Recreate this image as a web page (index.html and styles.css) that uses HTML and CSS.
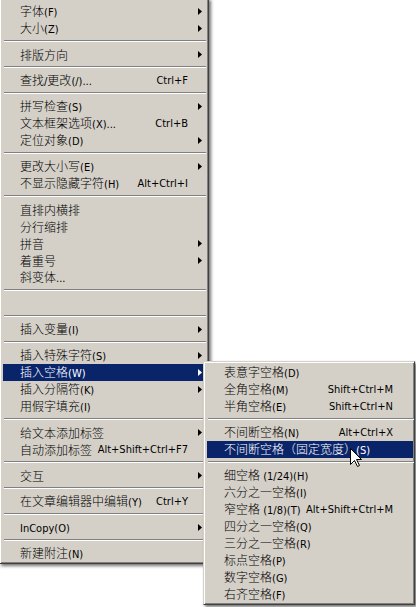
FILE: index.html
```html
<!DOCTYPE html>
<html lang="zh-CN">
<head>
<meta charset="utf-8">
<title>文字菜单</title>
<link rel="stylesheet" href="styles.css">
</head>
<body>
<div class="screen">
  <div class="menu main">
    <div class="item"><span class="label">字体<span class="en">(F)</span></span><i class="arr"></i></div>
    <div class="item"><span class="label">大小<span class="en">(Z)</span></span><i class="arr"></i></div>
    <div class="sep"></div>
    <div class="item"><span class="label">排版方向</span><i class="arr"></i></div>
    <div class="sep"></div>
    <div class="item"><span class="label">查找<span class="en">/</span>更改<span class="en">(/)...</span></span><span class="key">Ctrl+F</span></div>
    <div class="sep"></div>
    <div class="item"><span class="label">拼写检查<span class="en">(S)</span></span><i class="arr"></i></div>
    <div class="item"><span class="label">文本框架选项<span class="en">(X)...</span></span><span class="key">Ctrl+B</span></div>
    <div class="item"><span class="label">定位对象<span class="en">(D)</span></span><i class="arr"></i></div>
    <div class="sep"></div>
    <div class="item"><span class="label">更改大小写<span class="en">(E)</span></span><i class="arr"></i></div>
    <div class="item"><span class="label">不显示隐藏字符<span class="en">(H)</span></span><span class="key">Alt+Ctrl+I</span></div>
    <div class="sep"></div>
    <div class="item"><span class="label">直排内横排</span></div>
    <div class="item"><span class="label">分行缩排</span></div>
    <div class="item"><span class="label">拼音</span><i class="arr"></i></div>
    <div class="item"><span class="label">着重号</span><i class="arr"></i></div>
    <div class="item"><span class="label">斜变体<span class="en">...</span></span></div>
    <div class="sep"></div>
    <div class="item"><span class="label"></span></div>
    <div class="sep"></div>
    <div class="item"><span class="label">插入变量<span class="en">(I)</span></span><i class="arr"></i></div>
    <div class="sep"></div>
    <div class="item"><span class="label">插入特殊字符<span class="en">(S)</span></span><i class="arr"></i></div>
    <div class="item on"><span class="label">插入空格<span class="en">(W)</span></span><i class="arr"></i></div>
    <div class="item"><span class="label">插入分隔符<span class="en">(K)</span></span><i class="arr"></i></div>
    <div class="item"><span class="label">用假字填充<span class="en">(I)</span></span></div>
    <div class="sep"></div>
    <div class="item"><span class="label">给文本添加标签</span><i class="arr"></i></div>
    <div class="item"><span class="label">自动添加标签</span><span class="key">Alt+Shift+Ctrl+F7</span></div>
    <div class="sep"></div>
    <div class="item"><span class="label">交互</span><i class="arr"></i></div>
    <div class="sep"></div>
    <div class="item"><span class="label">在文章编辑器中编辑<span class="en">(Y)</span></span><span class="key">Ctrl+Y</span></div>
    <div class="sep"></div>
    <div class="item"><span class="label"><span class="en">InCopy(O)</span></span><i class="arr"></i></div>
    <div class="sep"></div>
    <div class="item"><span class="label">新建附注<span class="en">(N)</span></span></div>
  </div>

  <div class="menu submenu">
    <div class="item"><span class="label">表意字空格<span class="en">(D)</span></span></div>
    <div class="item"><span class="label">全角空格<span class="en">(M)</span></span><span class="key">Shift+Ctrl+M</span></div>
    <div class="item"><span class="label">半角空格<span class="en">(E)</span></span><span class="key">Shift+Ctrl+N</span></div>
    <div class="sep"></div>
    <div class="item"><span class="label">不间断空格<span class="en">(N)</span></span><span class="key">Alt+Ctrl+X</span></div>
    <div class="item on"><span class="label">不间断空格（固定宽度）<span class="en">(S)</span></span></div>
    <div class="sep"></div>
    <div class="item"><span class="label">细空格<span class="en"> (1/24)(H)</span></span></div>
    <div class="item"><span class="label">六分之一空格<span class="en">(I)</span></span></div>
    <div class="item"><span class="label">窄空格<span class="en"> (1/8)(T)</span></span><span class="key">Alt+Shift+Ctrl+M</span></div>
    <div class="item"><span class="label">四分之一空格<span class="en">(Q)</span></span></div>
    <div class="item"><span class="label">三分之一空格<span class="en">(R)</span></span></div>
    <div class="item"><span class="label">标点空格<span class="en">(P)</span></span></div>
    <div class="item"><span class="label">数字空格<span class="en">(G)</span></span></div>
    <div class="item"><span class="label">右齐空格<span class="en">(F)</span></span></div>
  </div>

  <svg class="cursor" width="13" height="21" viewBox="0 0 13 21" aria-hidden="true">
    <path d="M0.5 0.5 V16.5 L4.5 12.5 L7.5 18.5 L9.5 17.5 L6.5 11.5 H11.5 Z" fill="#fff" stroke="#000" stroke-width="1" stroke-linejoin="miter"/>
  </svg>
</div>
</body>
</html>
```

FILE: styles.css
```css
html, body {
  margin: 0;
  padding: 0;
  background: #ffffff;
}

.screen {
  position: relative;
  width: 416px;
  height: 607px;
  overflow: hidden;
}

.menu {
  background: #d4d0c8;
  color: #000;
  border: 1px solid;
  border-color: #d4d0c8 #404040 #404040 #d4d0c8;
  box-shadow: inset 1px 1px 0 #ffffff, inset -1px -1px 0 #808080, 2px 2px 3px rgba(0, 0, 0, 0.55);
  font-family: "DejaVu Sans Condensed", "Liberation Sans", "Noto Sans CJK SC", sans-serif;
  font-size: 12px;
  box-sizing: border-box;
}

.main {
  width: 210px;
  margin: -2px 0 0 -1px;
  padding: 4px 3px 1px 3px;
}

.submenu {
  position: absolute;
  left: 203px;
  top: 361px;
  width: 212px;
  padding: 2px 1px 1px 3px;
}

.item {
  display: flex;
  align-items: center;
  height: 17px;
  line-height: 17px;
  padding: 0 3px 0 17px;
  white-space: nowrap;
}

.submenu .item {
  padding-right: 6px;
}

.item.on {
  background: #0a246a;
  color: #ffffff;
}

.label {
  margin-right: auto;
  font-family: "Noto Sans CJK SC", sans-serif;
  font-size: 12px;
  font-weight: 300;
}

.en,
.key {
  font-family: "DejaVu Sans Condensed", "Liberation Sans", sans-serif;
  font-size: 11px;
  font-weight: 400;
}

.key {
  margin-right: 14px;
}

.arr {
  display: block;
  width: 4px;
  height: 7px;
  margin-left: 10px;
  background: currentColor;
  clip-path: polygon(0 0, 100% 50%, 0 100%);
}

.sep {
  height: 9px;
  box-sizing: border-box;
  padding-top: 3px;
  margin: 0 -1px 0 1px;
}

.sep::before {
  content: "";
  display: block;
  height: 1px;
  background: #808080;
  border-bottom: 1px solid #ffffff;
}

.cursor {
  position: absolute;
  left: 350px;
  top: 448px;
}
```
